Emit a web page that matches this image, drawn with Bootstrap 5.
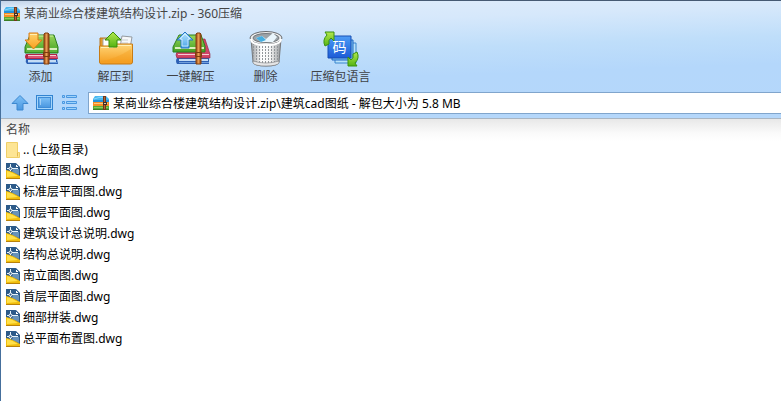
<!DOCTYPE html>
<html lang="zh-CN">
<head>
<meta charset="utf-8">
<meta name="viewport" content="width=device-width, initial-scale=1">
<title>某商业综合楼建筑结构设计.zip - 360压缩</title>
<link rel="stylesheet" href="https://cdn.jsdelivr.net/npm/bootstrap@5.3.0/dist/css/bootstrap.min.css">
<style>
body{font-family:"Noto Sans","Noto Sans CJK SC",sans-serif;font-size:12px;line-height:20px;color:#000;background:#fff}
.zip-window{border-left:1px solid #456f9c;border-top:1px solid #465a73}
.zip-head{background:linear-gradient(178deg,#c3d3e8 0,#dfecfb 8px,#d6e8fb 32px,#bfdefa 62px,#b4d7fb 90px,#b5d7fa 100%);color:#454545}
.title-row{height:26px;padding-left:3px;gap:4px}
.tool-row{padding-left:2px}
.tool-btn{width:75px;height:60px;padding:0;border:0;background:none;color:#3f4246;border-radius:0;font-size:12px;white-space:nowrap}
.tool-btn svg{margin-top:3px;flex-shrink:0}
.tool-btn span{line-height:14px}
.nav-row{height:31px;padding-left:10px}
.nav-btn{width:25px;height:20px;padding:0;border:0;background:none}
.path-box{height:22px;border:1px solid #80a5cc;border-right:0;background:#fff;margin-left:2px;padding-left:4px;gap:4px}
.path-box input{font-size:12px;line-height:18px;height:20px;padding:0;border:0;background:none;color:#000;min-width:0;outline:0}
.list-pane{border-top:1px solid #a9b5c2;background:linear-gradient(#e8e8e8 0,#fafafa 14px,#fff 22px)}
.files{width:100%;border-collapse:collapse}
.files th{height:20px;padding:0 5px;font-weight:400;color:#444;line-height:19px}
.files td{height:21px;padding:0 5px}
.files a{color:#000;line-height:21px;gap:3px}
</style>
<script src="https://cdn.jsdelivr.net/npm/bootstrap@5.3.0/dist/js/bootstrap.bundle.min.js"></script>
</head>
<body>
<svg width="0" height="0" class="d-block" aria-hidden="true">
<defs>
<linearGradient id="gGreen" x2="0" y2="1"><stop stop-color="#98d65b"/><stop offset="1" stop-color="#42a022"/></linearGradient>
<linearGradient id="gBelt"><stop stop-color="#9a4818"/><stop offset=".5" stop-color="#e79b50"/><stop offset="1" stop-color="#8b3c10"/></linearGradient>
<linearGradient id="gFold" x2="0" y2="1"><stop stop-color="#ffd678"/><stop offset="1" stop-color="#f49b1c"/></linearGradient>
<linearGradient id="gUp" x2="0" y2="1"><stop stop-color="#b4e84d"/><stop offset="1" stop-color="#55b413"/></linearGradient>
<linearGradient id="gOr" x2="0" y2="1"><stop stop-color="#ffd26c"/><stop offset="1" stop-color="#f9a11e"/></linearGradient>
<linearGradient id="gBlue" x2="0" y2="1"><stop stop-color="#b9e6ff"/><stop offset="1" stop-color="#4aa4e8"/></linearGradient>
<linearGradient id="gSq" x2="0" y2="1"><stop stop-color="#4d9cf6"/><stop offset="1" stop-color="#1c5bd6"/></linearGradient>
<linearGradient id="gNav" x2="0" y2="1"><stop stop-color="#7dc0f7"/><stop offset="1" stop-color="#4a97e0"/></linearGradient>
<linearGradient id="gBin"><stop stop-color="#9a9da0"/><stop offset=".35" stop-color="#fff"/><stop offset=".65" stop-color="#f4f4f4"/><stop offset="1" stop-color="#95989b"/></linearGradient>
<pattern id="pBin" width="3" height="3" patternUnits="userSpaceOnUse"><rect x="1" y="1" width="1" height="2" fill="#92969a"/></pattern>
<symbol id="zip" viewBox="0 0 16 14">
<path d="M2 0h11l3 3v3H0V3z" fill="#49b8f0"/><path d="M0 4h16v2H0z" fill="#2591da"/><path d="M1 3q6-3 12-1" fill="none" stroke="#8ad8fa"/>
<path d="M0 6h16v4H0z" fill="#f58f25"/><path d="M1 7h14v1H1z" fill="#ffc87c"/>
<path d="M0 10h16v4H0z" fill="#57ab35"/><path d="M1 11h14v1H1z" fill="#8cc85c"/><path d="M0 13h16v1H0z" fill="#3c7e24"/>
<path d="M10 0h3v14h-3z" fill="#73371b"/><path d="M11 1h1v12h-1z" fill="#b36735"/><path d="M10 6h4v3h-4z" fill="#3f2c26"/><path d="M11 7h2v1h-2z" fill="#e5c79c"/>
</symbol>
<symbol id="books" viewBox="0 0 40 40">
<path d="M5 29h31l1 5H6q-2-2-1-5z" fill="#2d60b4"/><path d="M7 30h28v2H7z" fill="#c4dcf5"/><path d="M7 32h29v1H7z" fill="#6fa1df"/>
<path d="M5 24h31l1 5H5q-2-2 0-5z" fill="#b32347"/><path d="M7 25h28v1H7z" fill="#f7cad4"/><path d="M7 26h29v2H7z" fill="#db5375"/>
<path d="M9 5h24l4 12v6H4v-6z" fill="url(#gGreen)" stroke="#2d7e20"/>
<path d="M5 17h31v5H5z" fill="#5eb53b"/><path d="M6 18h30v2H6z" fill="#d9efbd"/><path d="M10 6h22" stroke="#d0f3a4"/>
<path d="M24 3h3l1 1v30h-5V4z" fill="url(#gBelt)" stroke="#82400f"/><path d="M22.500 22.500h6v4h-6z" fill="none" stroke="#7e3b10"/>
</symbol>
<symbol id="dwg" viewBox="0 0 14 16">
<path d="M0 0h10l4 4v12H0z" fill="#2c5a89"/><path d="M7 6h6v6L6 9z" fill="#6792b9"/><path d="M9.500.500v4h4z" fill="#fff" stroke="#2c5a89"/>
<path d="M0 7q6 1 14 6v3H0z" fill="#f0bd0c"/><path d="M1 8q7 2 11 5l-11 1z" fill="#ffe04a"/><path d="M0 15h14v1H0z" fill="#b9820a"/>
<path d="M4.500 1v7M1 5.500h11" stroke="#e5f3fb"/><circle cx="4.500" cy="5.500" r="1.500" fill="#2c5a89" stroke="#fff"/>
</symbol>
</defs>
</svg>
<div class="zip-window min-vh-100 d-flex flex-column">
<header class="zip-head">
  <div class="title-row d-flex align-items-center"><svg width="16" height="14" class="flex-shrink-0"><use href="#zip"/></svg><span>某商业综合楼建筑结构设计.zip - 360压缩</span></div>
  <div class="tool-row d-flex overflow-hidden" role="toolbar">
    <button type="button" class="tool-btn btn d-flex flex-column align-items-center flex-shrink-0"><svg width="40" height="40" viewBox="0 0 40 40"><use href="#books" width="40" height="40"/><path d="M8 3h9v7h4L12.500 19 4 10h4z" fill="url(#gOr)" stroke="#d87d18"/><path d="M9 4.500h7" stroke="#fff0b5"/></svg><span>添加</span></button>
    <button type="button" class="tool-btn btn d-flex flex-column align-items-center flex-shrink-0"><svg width="40" height="40" viewBox="0 0 40 40"><path d="M4 8h8l2 2h20v20H4z" fill="#e49a2d" stroke="#b9751f"/><path d="M7 9h23v15H7z" fill="#fff" stroke="#a5a8aa"/><path d="M26 6l10 1-3 17-10-1z" fill="#f6f8fa" stroke="#949a9f"/><path d="M24 10h8M24 13h8" stroke="#c7cdd1"/><path d="M3.500 16h13l2-2h18v18q0 2-2 2h-29q-2 0-2-2z" fill="url(#gFold)" stroke="#c87b14"/><path d="M5 17.500h12l2-2h16" fill="none" stroke="#fff0b6"/><path d="M5 31q15-2 30-12v13H5z" fill="#f39a1a" opacity=".35"/><path d="M17 2l8 8h-4v7h-8v-7H9z" fill="url(#gUp)" stroke="#398d0a"/></svg><span>解压到</span></button>
    <button type="button" class="tool-btn btn d-flex flex-column align-items-center flex-shrink-0"><svg width="40" height="40" viewBox="0 0 40 40"><path d="M6 28h32v6H6q-2-3 0-6z" fill="#2d60b4"/><path d="M8 29h29v2H8z" fill="#c4dcf5"/><path d="M8 32h30v1H8z" fill="#729fdb"/><path d="M31 9h3l5 15v4H6q-2-3 0-6h25z" fill="#d04467" stroke="#92213e" stroke-width=".6"/><path d="M7 24h31v1H7z" fill="#f7cad4"/><path d="M8 5h22l4 11v6H2v-5z" fill="url(#gGreen)" stroke="#2d7e20"/><path d="M4 17h29v2H4z" fill="#d9efbd"/><path d="M25 4l1-1h3l1 1v30h-5z" fill="url(#gBelt)" stroke="#82400f"/><path d="M24.500 22.500h6v4h-6z" fill="none" stroke="#7e3b10"/><path d="M14 2l8 8h-4v8h-8v-8H6z" fill="url(#gBlue)" stroke="#2574c4"/><path d="M14 4l5 5h-2v7h-6V9H9z" fill="none" stroke="#e5f8ff" stroke-width=".7"/></svg><span>一键解压</span></button>
    <button type="button" class="tool-btn btn d-flex flex-column align-items-center flex-shrink-0"><svg width="40" height="40" viewBox="0 0 40 40"><path d="M5 9h30l-2 23q-1 4-13 4T7 32z" fill="url(#gBin)" stroke="#77797c"/><path d="M6 13h28l-2 18q-12 5-24 0z" fill="url(#pBin)"/><path d="M7 31q13 4 26 0v2q-2 3-13 3T7 33z" fill="#e5e5e6" stroke="#77797c" stroke-width=".6"/><ellipse cx="20" cy="8" rx="16" ry="6.500" fill="#eee" stroke="#66696d"/><ellipse cx="20" cy="8" rx="13" ry="4.500" fill="#9ca3a8" stroke="#74797d"/><path d="M10 8l6-2 4 3 7-6 4 4-4 5H15z" fill="#e9f5fc"/><path d="M10 8l6-2 4 4-5 2z" fill="#46aee0"/><path d="M5 9q0 6 15 6t15-6" fill="none" stroke="#fff" stroke-width="2"/></svg><span>删除</span></button>
    <button type="button" class="tool-btn btn d-flex flex-column align-items-center flex-shrink-0"><svg width="40" height="40" viewBox="0 0 40 40"><path d="M14 13h21v20H14z" fill="#b9e3fa" stroke="#3985ce"/><path d="M11 10h21v20H11z" fill="#80c5f1" stroke="#2168c5"/><path d="M7 6h23v22H7z" fill="url(#gSq)" stroke="#174eb4"/><text x="18.500" y="22" text-anchor="middle" font-size="14" font-family="Noto Sans CJK SC, sans-serif" fill="#fff">码</text><path d="M4 2h9v9l-3-3q-3 2-2 6l-4 2Q1 10 6 5z" fill="url(#gUp)" stroke="#3b910e"/><path d="M36 36h-9v-9l3 3q3-2 2-6l4-2q3 6-2 11z" fill="url(#gUp)" stroke="#3b910e"/></svg><span>压缩包语言</span></button>
  </div>
  <div class="nav-row d-flex align-items-center">
    <button type="button" class="nav-btn d-flex align-items-center" aria-label="向上"><svg width="18" height="18" viewBox="0 0 18 18"><path d="M9 1.500l8 8h-5v6.500H6V9.500H1z" fill="url(#gNav)" stroke="#3c88d0"/></svg></button>
    <button type="button" class="nav-btn d-flex align-items-center" aria-label="图标视图"><svg width="18" height="18" viewBox="0 0 18 18"><rect x=".5" y="1.500" width="16" height="14" fill="#a5d5fb" stroke="#3284d1"/><rect x="2.500" y="3.500" width="12" height="10" fill="url(#gNav)" stroke="#3f8cd6"/><path d="M4 6h1M4 8h1M4 10h1" stroke="#dff2ff"/></svg></button>
    <button type="button" class="nav-btn d-flex align-items-center" aria-label="列表视图"><svg width="18" height="18" viewBox="0 0 18 18" fill="#9dd2fb" stroke="#4a97e0"><path d="M1.500 1.500h2v2h-2zM5.500 1.500h10v2h-10zM1.500 7.500h2v2h-2zM5.500 7.500h10v2h-10zM1.500 13.500h2v2h-2zM5.500 13.500h10v2h-10z"/></svg></button>
    <div class="path-box d-flex align-items-center flex-grow-1"><svg width="16" height="14" class="flex-shrink-0"><use href="#zip"/></svg><input type="text" class="flex-grow-1" aria-label="路径" value="某商业综合楼建筑结构设计.zip\建筑cad图纸 - 解包大小为 5.8 MB"></div>
  </div>
</header>
<main class="list-pane flex-grow-1">
<table class="files">
<thead><tr><th scope="col">名称</th></tr></thead>
<tbody>
<tr><td><a href="#" class="d-flex align-items-center text-decoration-none"><svg width="14" height="16" viewBox="0 0 14 16"><path d="M.5.500h11v10h2v5H.5z" fill="#fde594" stroke="#efcf68"/><path d="M11.500 10.500v4" stroke="#e3b94e"/></svg><span>.. (上级目录)</span></a></td></tr>
<tr><td><a href="#" class="d-flex align-items-center text-decoration-none"><svg width="14" height="16"><use href="#dwg"/></svg><span>北立面图.dwg</span></a></td></tr>
<tr><td><a href="#" class="d-flex align-items-center text-decoration-none"><svg width="14" height="16"><use href="#dwg"/></svg><span>标准层平面图.dwg</span></a></td></tr>
<tr><td><a href="#" class="d-flex align-items-center text-decoration-none"><svg width="14" height="16"><use href="#dwg"/></svg><span>顶层平面图.dwg</span></a></td></tr>
<tr><td><a href="#" class="d-flex align-items-center text-decoration-none"><svg width="14" height="16"><use href="#dwg"/></svg><span>建筑设计总说明.dwg</span></a></td></tr>
<tr><td><a href="#" class="d-flex align-items-center text-decoration-none"><svg width="14" height="16"><use href="#dwg"/></svg><span>结构总说明.dwg</span></a></td></tr>
<tr><td><a href="#" class="d-flex align-items-center text-decoration-none"><svg width="14" height="16"><use href="#dwg"/></svg><span>南立面图.dwg</span></a></td></tr>
<tr><td><a href="#" class="d-flex align-items-center text-decoration-none"><svg width="14" height="16"><use href="#dwg"/></svg><span>首层平面图.dwg</span></a></td></tr>
<tr><td><a href="#" class="d-flex align-items-center text-decoration-none"><svg width="14" height="16"><use href="#dwg"/></svg><span>细部拼装.dwg</span></a></td></tr>
<tr><td><a href="#" class="d-flex align-items-center text-decoration-none"><svg width="14" height="16"><use href="#dwg"/></svg><span>总平面布置图.dwg</span></a></td></tr>
</tbody>
</table>
</main>
</div>
</body>
</html>
